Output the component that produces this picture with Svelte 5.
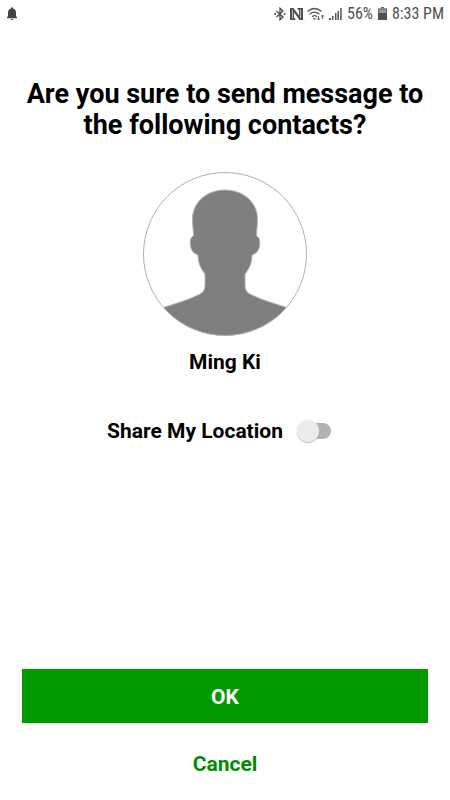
<div class="screen">
    <header class="status">
        <svg class="bell" width="12" height="14" viewBox="0 0 12 14" aria-hidden="true">
            <path d="M5 1.500V.5h2v1C9 2 10 3.600 10 5.500V9l1 1.500v.8H1v-.8L2 9V5.500C2 3.600 3 2 5 1.500zM4.800 12h2.400c0 .8-.5 1.200-1.200 1.200S4.800 12.800 4.800 12z" fill="#444"/>
        </svg>

        <div class="status-right">
            <div class="icons">
                <svg width="12" height="14" viewBox="0 0 12 14" aria-hidden="true">
                    <path d="M2.500 4L9 10 6 12.800V1.200L9 4 2.500 10" fill="none" stroke="#4a4a4a" stroke-width="1.300"/>
                    <circle cx="1.200" cy="7" r="1" fill="#4a4a4a"/>
                    <circle cx="10.600" cy="7" r="1" fill="#4a4a4a"/>
                </svg>
                <svg width="13" height="14" viewBox="0 0 13 14" aria-hidden="true">
                    <path d="M0 1H3.500L9 8.500V3.500L7 1H13V13H9.500L4 5.500V10.500L6 13H0z" fill="#505050"/>
                    <path d="M2.500 11.500V3M10.500 11V2.500" fill="none" stroke="#bbb"/>
                </svg>
                <svg width="18" height="14" viewBox="0 0 18 14" aria-hidden="true">
                    <g fill="none" stroke="#555" stroke-width="1.300">
                        <path d="M.5 4.500Q7.500-1.500 14.500 4.500"/>
                        <path d="M2.700 7.200Q7.500 3 12.300 7.200"/>
                        <path d="M5 9.700Q7.500 7.500 10 9.700"/>
                    </g>
                    <path d="M6 11h3l-1.500 2z" fill="#555"/>
                    <path d="M11.500 9v4M10.200 11.500l1.300 1.500 1.300-1.500M15.500 12V8M14.200 9.500L15.500 8l1.300 1.500" fill="none" stroke="#555"/>
                </svg>
                <svg width="13" height="14" viewBox="0 0 13 14" aria-hidden="true">
                    <path d="M0 11h2v2H0zM3 9h1.500v4H3zM6 6h1.500v7H6zM8.500 4H10v9H8.500zM11.200 1h1.500v12h-1.500z" fill="#555"/>
                </svg>
            </div>
            <span>56%</span>
            <svg width="9" height="14" viewBox="0 0 9 14" aria-hidden="true">
                <path d="M3 0h3v1.500h3V6H0V1.500h3z" fill="#999"/>
                <path d="M0 6h9v7H0z" fill="#505050"/>
                <path d="M3 .5h3M.5 6V2h8v4" fill="none" stroke="#666"/>
            </svg>
            <span>8:33 PM</span>
        </div>
    </header>

    <main>
        <h1>Are you sure to send message to the following contacts?</h1>

        {#each contacts as contact}
            <div class="contact">
                <svg width="164" height="164" viewBox="0 0 164 164" aria-hidden="true">
                    <clipPath id="round"><circle cx="82" cy="82" r="81.500"/></clipPath>
                    <path
                        clip-path="url(#round)"
                        d="M82 18C63 18 49.500 31 49.500 47C49.500 54 50.500 59 50.500 64C47 65 46.500 71 48 76C49 80 52 82 55 83C55 91 58 97 62 102V113C62 118 60 121 55 123C45 128 34 131 22 135L0 144V164H164V144L142 135C130 131 119 128 109 123C104 121 102 118 102 113V102C106 97 109 91 109 83C112 82 115 80 116 76C117.500 71 117 65 113.500 64C113.500 59 114.500 54 114.500 47C114.500 31 101 18 82 18Z"
                        fill="#7f7f7f"
                        stroke="#b4b4b4"
                    />
                    <circle cx="82" cy="82" r="81.500" fill="none" stroke="#b0b0b0"/>
                </svg>
                <span>{contact.name}</span>
            </div>
        {/each}

        <label class="share">
            Share My Location
            <input type="checkbox" role="switch" bind:checked={shareLocation}>
        </label>
    </main>

    <footer>
        <button class="ok">OK</button>
        <button class="cancel">Cancel</button>
    </footer>
</div>

<style>
    :global(body){
        margin: 0;
        background-color: white;
    }

    .screen{
        display: flex;
        flex-direction: column;
        min-height: 100vh;
        font-family: Roboto, sans-serif;
        font-size: 21px;
        line-height: 24px;
        font-weight: bold;
        color: black;
    }

    .status{
        display: flex;
        justify-content: space-between;
        align-items: center;
        height: 28px;
        padding: 0 6px;
        font-family: "Roboto Condensed", Roboto, sans-serif;
        font-size: 16px;
        font-weight: normal;
        color: #505050;
    }

    .status-right{
        display: flex;
        align-items: center;
        gap: 5px;
    }

    .icons{
        display: flex;
        gap: 4px;
    }

    main{
        flex: 1;
        display: flex;
        flex-direction: column;
        align-items: center;
        padding: 51px 22px 0;
    }

    h1{
        margin: 0;
        font-size: 27px;
        line-height: 31px;
        text-align: center;
    }

    .contact{
        display: flex;
        flex-direction: column;
        align-items: center;
        gap: 14px;
        margin-top: 31px;
    }

    .share{
        display: flex;
        align-items: center;
        gap: 14px;
        margin-top: 45px;
        padding-right: 12px;
    }

    .share input{
        appearance: none;
        display: flex;
        align-items: center;
        width: 34px;
        height: 16px;
        margin: 0;
        border-radius: 8px;
        background-color: #b2b2b2;
    }

    .share input::before{
        content: "";
        width: 22px;
        height: 22px;
        border-radius: 50%;
        background-color: #ececec;
        box-shadow: 0 1px 1px #bbb;
    }

    .share input:checked{
        justify-content: flex-end;
        background-color: #90d090;
    }

    .share input:checked::before{
        background-color: #090;
    }

    footer{
        display: flex;
        flex-direction: column;
        gap: 16px;
        padding: 0 22px 13px;
    }

    button{
        padding: 2px 0 0;
        border: none;
        font: inherit;
        cursor: pointer;
    }

    .ok{
        height: 54px;
        background-color: #090;
        color: white;
    }

    .cancel{
        height: 48px;
        background: none;
        color: #008c00;
    }
</style>

<script>
    let contacts = [{ name: "Ming Ki" }];
    let shareLocation = false;
</script>
